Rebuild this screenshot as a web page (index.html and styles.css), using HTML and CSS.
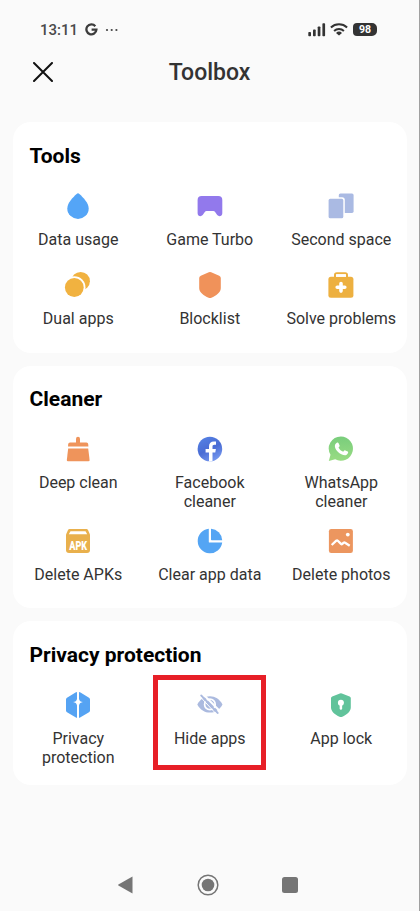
FILE: index.html
```html
<!DOCTYPE html>
<html lang="en">
<head>
<meta charset="utf-8">
<title>Toolbox</title>
<link rel="stylesheet" href="styles.css">
</head>
<body>
<div class="screen">
  <header class="status">
    <span class="time">13:11</span>
    <svg class="google" width="13" height="13" viewBox="0 0 13 13"><path d="M10.3 3.2A5 5 0 1 0 11.4 6.7H6.6" fill="none" stroke="#3c3c3c" stroke-width="2.3"/></svg>
    <svg class="dots" width="14" height="4" viewBox="0 0 14 4"><g fill="#444"><circle cx="2" cy="2" r="1.1"/><circle cx="6.7" cy="2" r="1.1"/><circle cx="11.4" cy="2" r="1.1"/></g></svg>
    <svg class="signal" width="18" height="14" viewBox="0 0 18 14"><g fill="#333"><rect x=".3" y="9" width="2.7" height="4.3" rx=".8"/><rect x="5" y="6.5" width="2.7" height="6.8" rx=".8"/><rect x="9.7" y="3.4" width="2.7" height="9.9" rx=".8"/><rect x="14.4" y=".3" width="2.7" height="13" rx=".8"/></g></svg>
    <svg class="wifi" width="18" height="13" viewBox="0 0 18 13"><g fill="none" stroke="#333" stroke-width="2"><path d="M.9 4.5a11.8 11.8 0 0 1 16.2 0"/><path d="M4.1 8a7.2 7.2 0 0 1 9.8 0"/></g><path d="M9 12.6 6 9.9a4.5 4.5 0 0 1 6 0z" fill="#333"/></svg>
    <span class="battery">98</span>
  </header>
  <div class="titlebar">
    <svg class="close" width="20" height="20" viewBox="0 0 20 20"><path d="M1 1 19 19M19 1 1 19" stroke="#111" stroke-width="2" stroke-linecap="round"/></svg>
    <h1>Toolbox</h1>
  </div>

  <main>
    <section class="card tools">
      <h2>Tools</h2>
      <div class="grid">
        <div class="tile">
          <svg viewBox="0 0 32 32"><path d="M14.6 3.9Q16 2.7 17.4 3.9C21 7.3 26.7 12.8 26.7 18.4A10.7 10.5 0 0 1 5.3 18.4C5.3 12.8 11 7.3 14.6 3.9Z" fill="#54a5f7"/></svg>
          <span>Data usage</span>
        </div>
        <div class="tile">
          <svg viewBox="0 0 32 32"><path d="M7.6 6h16.7a4 4 0 0 1 4 4v13.2c0 3.100-3.400 4-5.100 1.900l-2.100-3.200a2.200 2.200 0 0 0-1.800-.9h-6.700a2.200 2.200 0 0 0-1.800.9l-2.100 3.200c-1.700 2.100-5.100 1.200-5.100-1.900V10a4 4 0 0 1 4-4z" fill="#9279ec"/></svg>
          <span>Game Turbo</span>
        </div>
        <div class="tile">
          <svg viewBox="0 0 32 32"><rect x="13.8" y="3.4" width="14.8" height="19.5" rx="1.6" fill="#aabae3"/><rect x="2" y="7.3" width="17.8" height="22.6" rx="2.6" fill="#fff"/><rect x="3.6" y="8.8" width="14.7" height="19.5" rx="1.6" fill="#aabae3"/></svg>
          <span>Second space</span>
        </div>
        <div class="tile">
          <svg viewBox="0 0 32 32"><circle cx="18.6" cy="12.2" r="9.3" fill="#f1b240"/><circle cx="12.3" cy="18.5" r="11.2" fill="#fff"/><circle cx="12.3" cy="18.5" r="9.4" fill="#f1b240"/></svg>
          <span>Dual apps</span>
        </div>
        <div class="tile">
          <svg viewBox="0 0 32 32"><path d="M14.8 3.2q1.2-.6 2.4 0l8 3.5q1.6.7 1.6 2.3v10.2c0 4-4.800 7.600-9.400 9.600q-1.400.6-2.800 0c-4.600-2-9.400-5.600-9.400-9.600V9q0-1.600 1.600-2.300z" fill="#f0925a"/></svg>
          <span>Blocklist</span>
        </div>
        <div class="tile">
          <svg viewBox="0 0 32 32"><path d="M10 9V6q0-1.800 1.800-1.800h8.400Q22 4.200 22 6v3" fill="none" stroke="#edb040" stroke-width="2"/><rect x="3.4" y="7.7" width="25" height="21" rx="2.5" fill="#edb040"/><rect x="11" y="5.3" width="10" height="2.5" fill="#fff"/><path d="M16 14.5v7.6M12.2 18.3h7.6" stroke="#fff" stroke-width="3.6" stroke-linecap="round"/></svg>
          <span>Solve problems</span>
        </div>
      </div>
    </section>

    <section class="card cleaner">
      <h2>Cleaner</h2>
      <div class="grid">
        <div class="tile">
          <svg viewBox="0 0 32 32"><g fill="#ef945b"><path d="M14 10V5.800a2 2 0 0 1 4 0V10z"/><path d="M8 9.400h16.500q1.500 0 1.700 1.500l.2 2.600H6l.2-2.600Q6.400 9.400 8 9.400z"/><path d="M6.200 15.500h20l1.400 11.500q.1 1.300-1.200 1.300H6q-1.300 0-1.200-1.300z"/></g></svg>
          <span>Deep clean</span>
        </div>
        <div class="tile">
          <svg viewBox="0 0 32 32"><defs><linearGradient id="fb" x1="0" y1="0" x2=".5" y2="1"><stop offset="0" stop-color="#5684e6"/><stop offset=".6" stop-color="#4a6cd4"/><stop offset="1" stop-color="#7092eb"/></linearGradient></defs><circle cx="15.9" cy="16" r="12.3" fill="url(#fb)"/><path d="M15 28.300v-8.800h-3.400v-3.600H15v-2.500c0-3.400 2-5 4.800-5q1.200 0 2.200.2v3.100h-1.600c-1.400 0-1.900.8-1.900 1.800v2.400h3.400l-.6 3.600h-2.800v8.500z" fill="#fff"/></svg>
          <span>Facebook<br>cleaner</span>
        </div>
        <div class="tile">
          <svg viewBox="0 0 32 32"><defs><linearGradient id="wa" x1="0" y1="0" x2="0" y2="1"><stop offset="0" stop-color="#79cd7c"/><stop offset="1" stop-color="#99dc83"/></linearGradient></defs><path d="M15.900 3.500a12.100 12.100 0 1 1-5.700 22.800L3.800 28l1.700-6.200A12.100 12.100 0 0 1 15.900 3.500z" fill="url(#wa)"/><path d="M11.800 9.800c.8-.6 1.500-.2 1.800.5l1 2.200c.2.600-.3 1.200-1.100 1.900 1.200 2.200 2.600 3.400 4.800 4.300.8-1 1.300-1.600 2-1.300l2.400 1.200c1.200.7-.2 2.900-1.500 3.400-2 .8-6-.9-8.400-3.300-2.300-2.300-4.700-6.500-1-8.900z" fill="#fff"/></svg>
          <span>WhatsApp<br>cleaner</span>
        </div>
        <div class="tile">
          <svg viewBox="0 0 32 32"><path d="M7.500 4h17q1 0 1.500 1l2 4.500V25q0 3-3 3H7q-3 0-3-3V9.500L6 5q.5-1 1.500-1z" fill="#e9b04c"/><path d="M8.500 6.300h15l1.700 2.900H6.800z" fill="#fff"/><text class="apk" x="7.2" y="25.3" textLength="18" lengthAdjust="spacingAndGlyphs">APK</text></svg>
          <span>Delete APKs</span>
        </div>
        <div class="tile">
          <svg viewBox="0 0 32 32"><g fill="#54a5f4"><path d="M14.800 3.700v13.200q0 .7.700.7h12.700A12.300 12.300 0 1 1 14.800 3.700z"/><path d="M17 3.700A12.300 12.300 0 0 1 28.200 15.200H17.700q-.7 0-.7-.7z"/></g></svg>
          <span>Clear app data</span>
        </div>
        <div class="tile">
          <svg viewBox="0 0 32 32"><rect x="3.9" y="4" width="24" height="24" rx="2.3" fill="#ec965f"/><path d="m6.700 20 4.600-4.300q.8-.7 1.500 0l3.200 3.200q.7.600 1.400 0l1.300-1.200q.7-.6 1.400 0l4.600 3.100" fill="none" stroke="#fff" stroke-width="2.3" stroke-linejoin="round"/><circle cx="22.800" cy="9.600" r="1.900" fill="#fff"/></svg>
          <span>Delete photos</span>
        </div>
      </div>
    </section>

    <section class="card privacy">
      <h2>Privacy protection</h2>
      <div class="grid">
        <div class="tile">
          <svg viewBox="0 0 32 32"><g fill="#55a3f3"><path d="M15 3v7c-.5 2-1.500 2.700-4 3.100 2.500.5 3.500 1.300 4 3.300v12.400q-.7 0-1.500-.5L5 23.300q-1-.6-1-1.800v-11q0-1.200 1-1.800l8.500-5.200Q14.300 3 15 3z"/><path d="M17 3v7c.5 2 1.500 2.700 4 3.100-2.500.5-3.500 1.300-4 3.300v12.400q.7 0 1.500-.5l8.500-5q1-.6 1-1.800v-11q0-1.200-1-1.800l-8.500-5.200Q17.700 3 17 3z"/></g></svg>
          <span>Privacy<br>protection</span>
        </div>
        <div class="tile marked">
          <svg viewBox="0 0 32 32"><path d="M3.300 15.400C6.200 10 10.700 7.200 15.900 7.200S25.600 10 28.500 15.400C25.600 20.800 21.100 23.600 15.900 23.600S6.200 20.800 3.300 15.400z" fill="#abbadf"/><circle cx="15.900" cy="15.400" r="5.300" fill="none" stroke="#fff" stroke-width="1.700"/><path d="M9.300 5.500 26.300 22.500" stroke="#fff" stroke-width="2"/><path d="M7.300 6.600 23.600 23.900" stroke="#abbadf" stroke-width="2.100" stroke-linecap="round"/><path d="M6 7.500 22 24.800" stroke="#fff" stroke-width="1"/></svg>
          <span>Hide apps</span>
        </div>
        <div class="tile">
          <svg viewBox="0 0 32 32"><path d="M14.900 4.400q1-.5 2 0l7.700 3q1.200.5 1.200 1.700v9.300c0 4-4.200 7.300-8.500 9.300q-1.400.6-2.800 0c-4.300-2-8.500-5.300-8.500-9.300V9.100q0-1.200 1.200-1.700z" fill="#61c39b"/><circle cx="15.900" cy="13.700" r="3" fill="#fff"/><path d="M15.900 14v5.600" stroke="#fff" stroke-width="2.500" stroke-linecap="round"/></svg>
          <span>App lock</span>
        </div>
      </div>
    </section>
  </main>

  <nav>
    <svg width="16" height="18" viewBox="0 0 16 18"><path d="M14.500.5v17L.4 9.400q-.5-.4 0-.8z" fill="#757575"/></svg>
    <svg width="22" height="22" viewBox="0 0 22 22"><circle cx="11" cy="11" r="9.800" fill="none" stroke="#757575" stroke-width="1.500"/><circle cx="11" cy="11" r="6.300" fill="#757575"/></svg>
    <svg width="16" height="16" viewBox="0 0 16 16"><rect width="16" height="16" rx="2.500" fill="#757575"/></svg>
  </nav>
</div>
</body>
</html>
```
FILE: styles.css
```css
*, *::after { box-sizing: border-box; }
body { margin: 0; }
.screen {
  display: flex;
  flex-direction: column;
  width: 420px;
  height: 911px;
  overflow: hidden;
  background: #fafafa;
  border-right: 1px solid #a0a0a0;
  font-family: Roboto, "Liberation Sans", sans-serif;
  color: #333;
}
svg { display: block; flex: none; }
.status {
  display: flex;
  align-items: center;
  height: 19px;
  margin-top: 20px;
  padding: 0 42px 0 40px;
}
.time { width: 45px; padding-top: 1px; font-size: 15px; font-weight: 500; color: #4a4a4a; }
.dots { margin-left: 7px; }
.signal { margin-left: auto; }
.wifi { margin: 0 5px 0 4px; }
.battery {
  width: 24px;
  height: 13px;
  border-radius: 4px 5px 5px 4px;
  background: #333;
  color: #fff;
  font-size: 10.5px;
  font-weight: 700;
  line-height: 13px;
  text-align: center;
}
.titlebar {
  display: grid;
  grid-template-columns: 40px 1fr 40px;
  align-items: center;
  height: 30px;
  margin: 17px 33px 0;
}
h1 {
  margin: 0;
  padding-top: 3px;
  text-align: center;
  font-size: 23px;
  font-weight: 500;
  line-height: 28px;
}
main {
  display: flex;
  flex-direction: column;
  gap: 13px;
  margin: 36px 12px 0 12.5px;
}
.card { border-radius: 18px; background: #fff; }
.tools { height: 231px; }
.cleaner { height: 242px; }
.privacy { height: 164px; }
h2 {
  height: 68px;
  margin: 0;
  padding: 22px 17px 0;
  color: #000;
  font-size: 21px;
  font-weight: 700;
  line-height: 24px;
}
.cleaner h2 { height: 67px; padding-top: 21px; }
.grid {
  display: grid;
  grid-template-columns: repeat(3, 1fr);
  row-gap: 20px;
}
.cleaner .grid { row-gap: 14px; }
.tile {
  position: relative;
  display: flex;
  flex-direction: column;
  align-items: center;
  gap: 8px;
  font-size: 16px;
  line-height: 19px;
  text-align: center;
  white-space: nowrap;
}
.tile svg { width: 32px; height: 32px; }
.apk {
  font-family: Roboto, sans-serif;
  font-size: 12px;
  font-weight: 900;
  fill: #fff;
}
.marked::after {
  content: "";
  position: absolute;
  top: -14.5px;
  left: 50%;
  width: 113px;
  height: 95px;
  margin-left: -56.7px;
  border: 5px solid #e71f27;
}
nav {
  display: flex;
  align-items: center;
  height: 24px;
  margin-top: 88px;
  padding-left: 118px;
}
nav svg + svg { margin-left: 63.3px; }
nav svg:last-child { margin-left: 63px; }
```
